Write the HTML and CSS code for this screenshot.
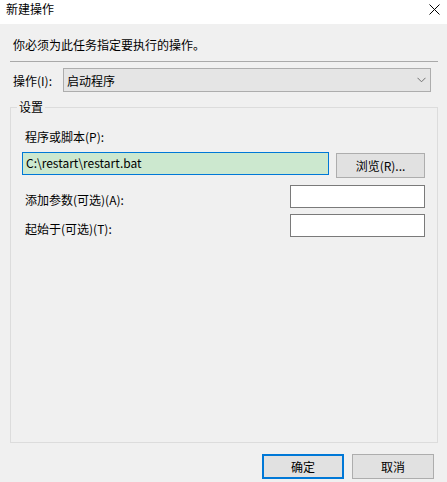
FILE: index.html
```html
<!DOCTYPE html>
<html lang="zh-CN">
<head>
<meta charset="utf-8">
<title>新建操作</title>
<link rel="stylesheet" href="styles.css">
</head>
<body>
<div class="dialog">
  <div class="titlebar">
    <span class="title">新建操作</span>
    <svg class="close" width="11" height="11" viewBox="0 0 11 11" aria-hidden="true">
      <path d="M0.5 0.5 L10.5 10.5 M10.5 0.5 L0.5 10.5" stroke="#000" stroke-width="1" fill="none"/>
    </svg>
  </div>
  <div class="body">
    <p class="intro">你必须为此任务指定要执行的操作。</p>
    <div class="sep"></div>
    <div class="action-row">
      <span class="action-label">操作(I):</span>
      <div class="combo">
        <span class="combo-text">启动程序</span>
        <svg class="chevron" width="9" height="6" viewBox="0 0 9 6" aria-hidden="true">
          <path d="M0.5 0.8 L4.5 4.8 L8.5 0.8" stroke="#707070" stroke-width="1" fill="none"/>
        </svg>
      </div>
    </div>
    <fieldset class="group">
      <legend class="group-title">设置</legend>
      <div class="group-inner">
        <div class="field-label">程序或脚本(P):</div>
        <div class="program-row">
          <div class="input input-focus">C:\restart\restart.bat</div>
          <div class="btn browse">浏览(R)...</div>
        </div>
        <div class="arg-row first">
          <span class="arg-label">添加参数(可选)(A):</span>
          <div class="input input-small"></div>
        </div>
        <div class="arg-row">
          <span class="arg-label">起始于(可选)(T):</span>
          <div class="input input-small"></div>
        </div>
      </div>
    </fieldset>
    <div class="buttons">
      <div class="btn dlg-btn default">确定</div>
      <div class="btn dlg-btn">取消</div>
    </div>
  </div>
</div>
</body>
</html>
```
FILE: styles.css
```css
* { box-sizing: border-box; }
html, body { margin: 0; padding: 0; }
body {
  background: #f0f0f0;
  font-family: "Segoe UI", "Noto Sans CJK SC", "Noto Sans", sans-serif;
  font-size: 12px;
  line-height: 16px;
  color: #000;
}
.dialog {
  width: 447px;
  height: 482px;
  display: flex;
  flex-direction: column;
  background: #f0f0f0;
  overflow: hidden;
}
.titlebar {
  height: 24px;
  background: #fff;
  display: flex;
  align-items: flex-start;
  justify-content: space-between;
  padding: 1px 7px 0 6px;
  flex: none;
}
.title { line-height: 16px; }
.close { margin-top: 3px; }
.body {
  flex: 1;
  display: flex;
  flex-direction: column;
  padding: 13px 9px 3px 10px;
}
.intro {
  margin: 0;
  padding-left: 3px;
  height: 16px;
}
.sep {
  height: 1px;
  background: #a9a9a9;
  margin-top: 8px;
}
.action-row {
  display: flex;
  align-items: center;
  margin-top: 6px;
  padding: 0 7px 0 3px;
}
.action-label { width: 50px; flex: none; padding-top: 2px; }
.combo {
  flex: 1;
  height: 24px;
  border: 1px solid #adadad;
  background: #e5e5e5;
  display: flex;
  align-items: center;
  justify-content: space-between;
  padding: 1px 4px 0 3px;
}
.chevron { margin-right: 0; margin-top: -2px; }
.group {
  flex: 1;
  margin: 7px 0 0 0;
  padding: 0 0 0 6px;
  border: 1px solid #dcdcdc;
  min-width: 0;
}
.group-title {
  padding: 0 2px;
  line-height: 16px;
}
.group-inner {
  padding: 14px 12px 0 5px;
}
.field-label { margin-left: 3px; height: 16px; }
.program-row {
  display: flex;
  align-items: flex-start;
  gap: 7px;
  margin-top: 7px;
}
.input {
  background: #fff;
  border: 1px solid #7a7a7a;
  height: 23px;
}
.input-focus {
  flex: 1;
  border-color: #0078d7;
  background: #cce8cf;
  padding: 2px 0 0 3px;
}
.btn {
  background: #e1e1e1;
  border: 1px solid #adadad;
  display: flex;
  align-items: center;
  justify-content: center;
}
.browse {
  width: 89px;
  height: 25px;
  margin-top: 1px;
  padding-top: 1px;
}
.arg-row {
  display: flex;
  align-items: flex-start;
  justify-content: space-between;
  margin-top: 6px;
}
.arg-row.first { margin-top: 7px; }
.arg-label { margin-left: 3px; margin-top: 7px; }
.input-small { width: 135px; }
.buttons {
  display: flex;
  justify-content: flex-end;
  gap: 8px;
  margin-top: 11px;
  padding-right: 4px;
}
.dlg-btn {
  width: 82px;
  height: 25px;
  padding-top: 1px;
}
.dlg-btn.default {
  border: 2px solid #0078d7;
}
```
